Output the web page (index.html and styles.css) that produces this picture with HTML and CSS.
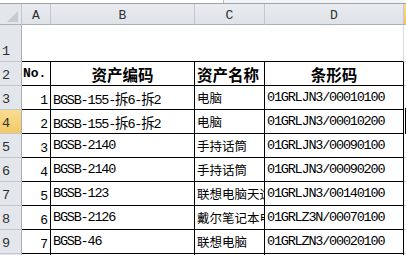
FILE: index.html
```html
<!DOCTYPE html>
<html>
<head>
<meta charset="utf-8">
<link rel="stylesheet" href="styles.css">
</head>
<body>
<div class="topbar"><div class="namebox"></div></div>
<div class="sheet">
  <div class="corner"><svg width="11" height="11" viewBox="0 0 11 11"><polygon points="11,0 11,11 0,11" fill="#c6cbd2"/></svg></div>
  <div class="colhead">A</div>
  <div class="colhead">B</div>
  <div class="colhead">C</div>
  <div class="colhead">D</div>
  <div class="colhead sel"></div>

  <div class="rowhead">1</div>
  <div class="title"></div>
  <div class="cell e"></div>

  <div class="rowhead">2</div>
  <div class="cell t hd no">No.</div>
  <div class="cell t hd ctr">资产编码</div>
  <div class="cell t hd">资产名称</div>
  <div class="cell t hd ctr">条形码</div>
  <div class="cell e"></div>

  <div class="rowhead">3</div>
  <div class="cell t num">1</div>
  <div class="cell t">BGSB-155-拆6-拆2</div>
  <div class="cell t c">电脑</div>
  <div class="cell t">01GRLJN3/00010100</div>
  <div class="cell e"></div>

  <div class="rowhead sel">4</div>
  <div class="cell t num">2</div>
  <div class="cell t">BGSB-155-拆6-拆2</div>
  <div class="cell t c">电脑</div>
  <div class="cell t">01GRLJN3/00010200</div>
  <div class="cell e active"></div>

  <div class="rowhead">5</div>
  <div class="cell t num">3</div>
  <div class="cell t">BGSB-2140</div>
  <div class="cell t c">手持话筒</div>
  <div class="cell t">01GRLJN3/00090100</div>
  <div class="cell e"></div>

  <div class="rowhead">6</div>
  <div class="cell t num">4</div>
  <div class="cell t">BGSB-2140</div>
  <div class="cell t c">手持话筒</div>
  <div class="cell t">01GRLJN3/00090200</div>
  <div class="cell e"></div>

  <div class="rowhead">7</div>
  <div class="cell t num">5</div>
  <div class="cell t">BGSB-123</div>
  <div class="cell t c">联想电脑天逸</div>
  <div class="cell t">01GRLJN3/00140100</div>
  <div class="cell e"></div>

  <div class="rowhead">8</div>
  <div class="cell t num">6</div>
  <div class="cell t">BGSB-2126</div>
  <div class="cell t c">戴尔笔记本电脑</div>
  <div class="cell t">01GRLZ3N/00070100</div>
  <div class="cell e"></div>

  <div class="rowhead">9</div>
  <div class="cell t num">7</div>
  <div class="cell t">BGSB-46</div>
  <div class="cell t c">联想电脑</div>
  <div class="cell t">01GRLZN3/00020100</div>
  <div class="cell e"></div>

  <div class="rowhead"></div>
  <div class="cell t"></div>
  <div class="cell t"></div>
  <div class="cell t"></div>
  <div class="cell t"></div>
  <div class="cell e"></div>
</div>
</body>
</html>
```

FILE: styles.css
```css
html, body {
  margin: 0;
  padding: 0;
  background: #ffffff;
  overflow: hidden;
}

.topbar {
  height: 3px;
  background: #f4f5f7;
  border-bottom: 1px solid #9da3ab;
  display: flex;
}

.namebox {
  width: 223px;
  height: 3px;
  background: #ffffff;
  border-right: 1px solid #b9bec5;
}

.sheet {
  display: grid;
  grid-template-columns: 22px 29px 144px 70px 139px 1fr;
  grid-template-rows: 21px 37px repeat(9, 24px);
  font-family: "Liberation Mono", "Noto Sans CJK SC", monospace;
  font-size: 13.5px;
  letter-spacing: -1.2px;
  color: #000;
}

.sheet > div {
  box-sizing: border-box;
  min-width: 0;
}

.corner {
  background: #e3e6ea;
  border-right: 1px solid #c3c8cf;
  border-bottom: 1px solid #a9b0b9;
  display: flex;
  align-items: flex-end;
  justify-content: flex-end;
  padding: 0 3px 2px 0;
}

.corner svg {
  display: block;
}

.colhead {
  background: linear-gradient(#e9ecf0, #dfe3e8);
  border-right: 1px solid #c3c8cf;
  border-bottom: 1px solid #a9b0b9;
  display: flex;
  justify-content: center;
  align-items: flex-end;
  padding-bottom: 1px;
  font-family: "Liberation Mono", monospace;
  font-size: 13px;
  letter-spacing: 0;
  color: #303030;
}

.colhead.sel {
  background: linear-gradient(#f9dd93, #f2c55c);
  border-right: none;
}

.rowhead {
  background: #e3e6ea;
  border-right: 1px solid #a9b0b9;
  border-bottom: 1px solid #c3c8cf;
  display: flex;
  align-items: flex-end;
  padding: 0 0 2px 2px;
  font-family: "Liberation Mono", monospace;
  font-size: 13.5px;
  letter-spacing: 0;
  color: #303030;
  overflow: hidden;
}

.rowhead.sel {
  background: linear-gradient(#f9dc92, #f4c965);
}

.title {
  grid-column: 2 / 6;
  border-right: 1px solid #d6dbe2;
  border-bottom: 1px solid #000;
}

.cell {
  display: flex;
  align-items: center;
  white-space: nowrap;
  overflow: hidden;
  padding-left: 2px;
}

.cell.t {
  border-right: 1px solid #000;
  border-bottom: 1px solid #000;
}

.cell.e {
  border-bottom: 1px solid #d6dbe2;
  padding: 0;
}

.cell.active {
  position: relative;
  overflow: visible;
}

.cell.active::after {
  content: "";
  position: absolute;
  left: 1px;
  top: -2px;
  bottom: -1px;
  width: 20px;
  border: 2px solid #000;
}

.hd {
  font-family: "Noto Sans CJK SC", sans-serif;
  font-weight: 700;
  font-size: 15.5px;
  letter-spacing: 0;
}

.hd.no {
  font-family: "Liberation Mono", monospace;
  font-size: 13px;
  padding-left: 1px;
}

.hd.ctr {
  justify-content: center;
  padding-left: 0;
}

.c {
  font-size: 12.5px;
  letter-spacing: 0;
}

.num {
  justify-content: flex-end;
  align-items: flex-end;
  padding: 0 2px 1px 0;
  font-size: 13px;
  letter-spacing: 0;
}
```
